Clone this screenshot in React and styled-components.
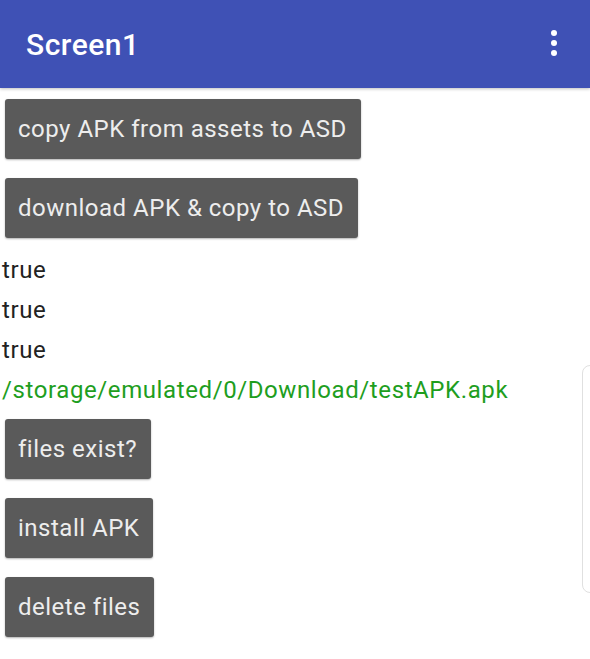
import React from 'react';
import styled, { createGlobalStyle } from 'styled-components';

const GlobalStyle = createGlobalStyle`
  html, body {
    margin: 0;
    padding: 0;
    background: #ffffff;
  }
  body {
    font-family: Roboto, "Noto Sans", "Liberation Sans", sans-serif;
  }
`;

const Screen = styled.div`
  position: relative;
  width: 590px;
  height: 659px;
  overflow: hidden;
  background: #ffffff;
`;

const AppBar = styled.header`
  display: flex;
  align-items: center;
  justify-content: space-between;
  height: 88px;
  padding: 0 33px 0 26px;
  box-sizing: border-box;
  background: #3f51b5;
  box-shadow: 0 1px 3px rgba(0, 0, 0, 0.25);
`;

const Title = styled.h1`
  margin: 0;
  font-size: 30px;
  font-weight: 500;
  color: #ffffff;
  letter-spacing: 0.5px;
`;

const MenuDots = styled.div`
  display: flex;
  flex-direction: column;
  gap: 4px;
  margin-top: -2px;
  span {
    width: 6px;
    height: 6px;
    border-radius: 50%;
    background: #ffffff;
  }
`;

const Content = styled.main`
  display: flex;
  flex-direction: column;
  align-items: flex-start;
  padding: 11px 0 0 0;
`;

const ButtonGroup = styled.div`
  display: flex;
  flex-direction: column;
  align-items: flex-start;
  gap: 19px;
  padding-left: 5px;
  margin-top: ${(p) => p.$top || 0}px;
`;

const Button = styled.button`
  height: 60px;
  padding: 0 14px 0 13px;
  border: 0;
  border-radius: 3px;
  background: #5a5a5a;
  color: #ededed;
  font-family: Roboto, "Noto Sans", sans-serif;
  font-size: 24px;
  letter-spacing: 0.5px;
  box-shadow: 0 1px 2px rgba(0, 0, 0, 0.3);
  cursor: pointer;
`;

const Lines = styled.div`
  margin-top: 12px;
  padding-left: 2px;
`;

const Line = styled.div`
  font-size: 24px;
  line-height: 40px;
  letter-spacing: 0.6px;
  color: ${(p) => p.$color || '#222222'};
`;

const SideCard = styled.div`
  position: absolute;
  left: 582px;
  top: 365px;
  width: 40px;
  height: 226px;
  border: 1px solid #e0e0e0;
  border-radius: 8px;
  background: #ffffff;
`;

export default function App() {
  return (
    <Screen>
      <GlobalStyle />
      <AppBar>
        <Title>Screen1</Title>
        <MenuDots>
          <span />
          <span />
          <span />
        </MenuDots>
      </AppBar>
      <Content>
        <ButtonGroup>
          <Button>copy APK from assets to ASD</Button>
          <Button>download APK &amp; copy to ASD</Button>
        </ButtonGroup>
        <Lines>
          <Line>true</Line>
          <Line>true</Line>
          <Line>true</Line>
          <Line $color="#1e9e1e">/storage/emulated/0/Download/testAPK.apk</Line>
        </Lines>
        <ButtonGroup $top={9}>
          <Button>files exist?</Button>
          <Button>install APK</Button>
          <Button>delete files</Button>
        </ButtonGroup>
      </Content>
      <SideCard />
    </Screen>
  );
}
